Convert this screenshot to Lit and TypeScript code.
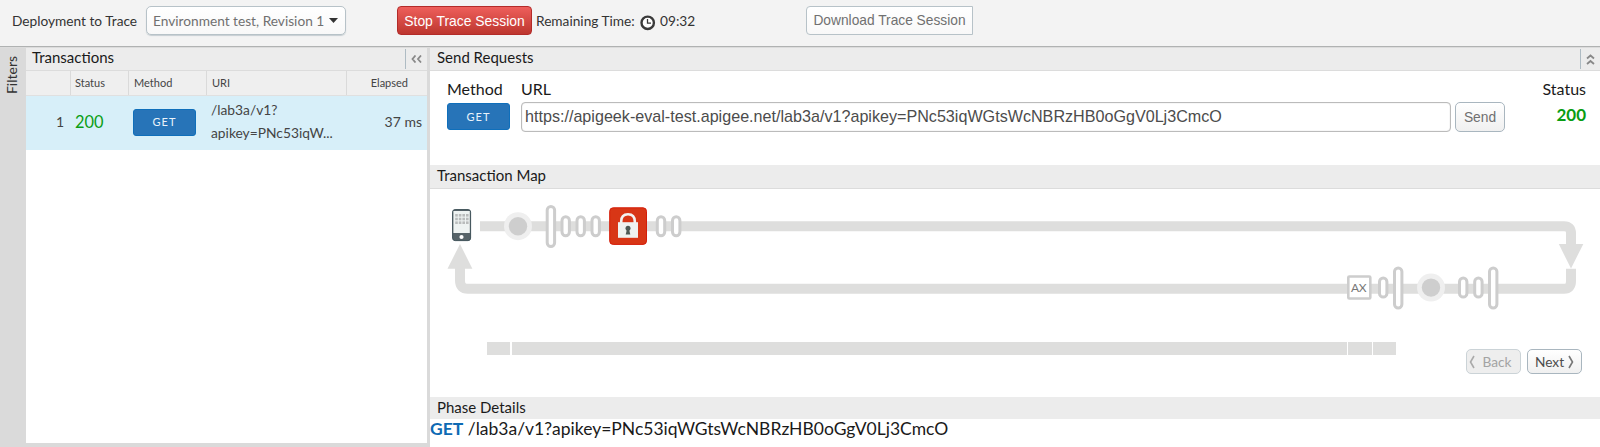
import { LitElement, html, svg, css } from "lit";
import { customElement } from "lit/decorators.js";

const API_PATH = "/lab3a/v1?apikey=PNc53iqWGtsWcNBRzHB0oGgV0Lj3CmcO";

@customElement("method-badge")
class MethodBadge extends LitElement {
  static styles = css`
    :host { display: flex; align-items: center; justify-content: center; box-sizing: border-box;
      width: 63px; height: 27px; border: 1px solid #0f6fbb; border-radius: 3px; padding-bottom: 1px;
      background: #2774b8; color: #eaf3fa; font: 11px Lato, sans-serif; letter-spacing: 1.1px; }
  `;
  render() { return html`<span><slot></slot></span>`; }
}

@customElement("transaction-map")
class TransactionMap extends LitElement {
  static styles = css`
    :host { display: block; height: 153px; }
    .map { display: block; }
    .line { fill: none; stroke: #dededd; stroke-width: 10; }
    .arrow { fill: #dededd; }
    .halo { fill: #efefef; }
    .dot { fill: #cecece; }
    .step { fill: #fff; stroke: #cdcdcd; stroke-width: 3; }
    .box { stroke-width: 2.6; }
    .ax { font: 12px Lato, sans-serif; fill: #777; }
  `;
  private pill(x: number, y: number, tall = false) {
    const h = tall ? 40 : 19;
    return svg`<rect class="step" x=${x - 3.5} y=${y - h / 2} width="7.4" height=${h} rx="3.7"/>`;
  }
  private node(x: number, y: number) {
    return svg`<circle class="halo" cx=${x} cy=${y} r="14"/><circle class="dot" cx=${x} cy=${y} r="9.2"/>`;
  }
  render() {
    const keys = [0, 1, 2].flatMap((r) => [0, 1, 2, 3].map((c) => [455.2 + c * 3.6, 214 + r * 3.7]));
    return html`<svg class="map" width="1170" height="153" viewBox="430 189 1170 153">
      <path class="line" d="M480 226.2H1564Q1571 226.2 1571 233.5V245"/>
      <path class="arrow" d="M1558.8 244H1583.3L1571 268.5Z"/>
      <path class="line" d="M1571 268.7V281Q1571 288.7 1564 288.7H468Q460 288.7 460 280.5V268"/>
      <path class="arrow" d="M460 244L472.4 268.8H447.5Z"/>
      <rect x="452.6" y="209.6" width="18" height="31" rx="2.5" fill="#566368" stroke="#3e5158"/>
      <rect x="453.4" y="211" width="16.4" height="22" fill="#eef3f2"/>
      ${keys.map(([x, y]) => svg`<rect x=${x} y=${y} width="2.6" height="2.6" fill="#b9bcbc"/>`)}
      <circle cx="461.5" cy="237" r="2.1" fill="#fff"/>
      ${this.node(518, 226.2)}
      ${this.pill(550.7, 226.4, true)}
      ${[565.5, 580.5, 595.5].map((x) => this.pill(x, 226.2))}
      <rect x="609.7" y="207.8" width="36.8" height="36.6" rx="3.5" fill="#d83616" stroke="#d51c08"/>
      <path d="M621.2 223V221.5Q621.2 214.2 628 214.2T634.8 221.5V223" fill="none" stroke="#f3f3f1" stroke-width="2.6"/>
      <rect x="618" y="222.2" width="20" height="15.6" fill="#eff2f0"/>
      <circle cx="628" cy="228.2" r="2.5" fill="#4e5a55"/>
      <path d="M627 229H629L630.3 234.6H625.7Z" fill="#4e5a55"/>
      ${[660.8, 676].map((x) => this.pill(x, 226.2))}
      <rect class="step box" x="1348.3" y="276.5" width="22" height="22" rx="1"/>
      <text class="ax" x="1351" y="292" textLength="15.5">AX</text>
      ${[1383, 1463, 1478.2].map((x) => this.pill(x, 287.6))}
      ${[1398, 1493].map((x) => this.pill(x, 287.9, true))}
      ${this.node(1431, 287.6)}
    </svg>`;
  }
}

@customElement("app-root")
class AppRoot extends LitElement {
  static styles = css`
    * { box-sizing: border-box; }
    :host { display: flex; flex-direction: column; width: 1600px; height: 447px; overflow: hidden;
      font: 14px Lato, sans-serif; color: #333; background: #fff; white-space: nowrap; }
    .top { height: 47px; flex: none; display: flex; align-items: flex-start; padding: 6px 0 0 12px;
      background: #f3f3f3; border-bottom: 1px solid #b0b2b2; font-size: 13.7px; }
    .top > * { height: 29px; display: flex; align-items: center; flex: none; }
    .deploy { width: 134px; }
    .select { width: 200px; border: 1px solid #b7c2c8; border-radius: 5px; background: linear-gradient(#fff, #f8f8f8);
      color: #707070; padding: 0 7px 0 6px; justify-content: space-between; box-shadow: 0 1px 1px #c6ced2; }
    .stop { margin-left: 51px; width: 135px; border-radius: 4px; border: 1px solid #b32b29; color: #fff;
      background: linear-gradient(#ee5f5b, #bd362f); font: 13.9px "Liberation Sans", sans-serif; justify-content: center; }
    .remain { margin-left: 4px; width: 104px; }
    .clock { width: 20px; }
    .time { width: 146px; }
    .download { width: 167px; border: 1px solid #b7c2c8; border-radius: 4px 0 0 4px; color: #707070;
      background: linear-gradient(#fff, #f8f8f8); font: 13.75px "Liberation Sans", sans-serif; justify-content: center; }
    .body { flex: 1; display: flex; min-height: 0; border-top: 1px solid #dcdcdc; }
    .filters { width: 26px; flex: none; background: #dadada; padding: 8px 2px 0 0; display: flex; align-items: flex-start; justify-content: center; }
    .vertical { writing-mode: vertical-rl; transform: rotate(180deg); font-size: 14px; line-height: 22px; }
    .left { width: 404px; flex: none; display: flex; flex-direction: column; border-right: 3px solid #dadada;
      border-bottom: 4px solid #dadada; }
    .title { height: 23px; flex: none; display: flex; justify-content: space-between; background: #ececec;
      border-bottom: 1px solid #dcdcdc; line-height: 18px; font-size: 15px; color: #1a1a1a; }
    .collapse { display: flex; align-items: center; justify-content: center; width: 22px; height: 20px; margin-top: 1px;
      border-left: 1px solid #aebbc3; }
    .bar .collapse { width: 20px; }
    .tx { padding-left: 6px; }
    .cols { display: grid; grid-template-columns: 45px 58px 78px 140px 80px; }
    .heads { height: 25px; background: #efefef; border-bottom: 1px solid #e0e0e0; font-size: 11px; line-height: 23px; color: #444; }
    .heads > * { border-right: 1px solid #dadada; padding-left: 5px; }
    .heads > :nth-child(2) { padding-left: 4px; }
    .heads > :last-child { border: 0; text-align: right; padding-right: 19px; }
    .row { height: 54px; background: #d7eff9; align-items: center; font-size: 14px; color: #444; padding-bottom: 2px; }
    .num { text-align: right; padding: 0 7px 2px 0; }
    .code { padding: 0 0 2px 4px; color: #0a9e14; font-size: 16.4px; }
    .badge { padding-left: 4px; }
    .uri { padding: 0 0 1px 4px; line-height: 22.5px; font-size: 13.8px; }
    .elapsed { text-align: right; padding: 0 5px 2px 0; }
    .right { flex: 1; display: flex; flex-direction: column; min-width: 0; }
    .bar { padding-left: 7px; }
    .maptitle { height: 24px; line-height: 20px; }
    .send { height: 94px; flex: none; display: flex; padding: 10px 14px 0 17px; font-size: 16px; color: #1a1a1a; }
    .field { display: flex; flex-direction: column; }
    .label { height: 21px; line-height: 15px; }
    .m { width: 74px; }
    .m .label { height: 22px; }
    .input { width: 930px; height: 30px; border: 1px solid #bbb; border-radius: 4px; box-shadow: inset 0 0 1px #aaa;
      font: 16.14px/27px "Liberation Sans", sans-serif; color: #4c4c4c; padding-left: 3px; }
    .btn { border: 1px solid #a9b6bf; border-radius: 5px; background: linear-gradient(#fff, #f0f0f0);
      display: flex; align-items: center; justify-content: center; color: #707070; }
    .go { width: 50px; height: 30px; margin: 21px 0 0 4px; font: 13.8px "Liberation Sans", sans-serif; }
    .st { margin-left: auto; text-align: right; }
    .ok { color: #099d12; font-weight: bold; font-size: 17px; line-height: 26px; }
    .foot { height: 55px; flex: none; display: flex; padding-left: 57px; align-items: flex-start; }
    .seg { height: 13px; background: #dededd; margin-right: 1px; }
    .seg:first-child { margin-right: 2px; }
    .nav { width: 55px; height: 25px; margin-top: 7px; font-size: 13.7px; gap: 4px; }
    .back { margin-left: 69px; color: #a3a3a3; background: #eee; border-color: #cbd3d7; gap: 7px; padding-right: 6px; }
    .next { margin-left: 6px; color: #4c4c4c; }
    .phase { height: 22px; border: 0; line-height: 20px; }
    .detail { font-size: 17.5px; line-height: 19px; color: #1a1a1a; }
    .get { color: #0d6ab4; font-weight: bold; }
  `;
  render() {
    const segs = [23, 835, 24, 23];
    return html`
      <div class="top">
        <div class="deploy">Deployment to Trace</div>
        <div class="select"><span>Environment test, Revision 1</span>
          <svg width="9" height="5"><path d="M0 0H9L4.5 5Z" fill="#333"/></svg></div>
        <div class="stop">Stop Trace Session</div>
        <div class="remain">Remaining Time:</div>
        <div class="clock"><svg width="16" height="20" viewBox="0 0 16 20"><circle cx="7.7" cy="11.8" r="6.2" fill="#fff" stroke="#3a3a3a" stroke-width="2.4"/><path d="M7.5 8V12.2H11" fill="none" stroke="#3a3a3a" stroke-width="1.3"/></svg></div>
        <div class="time">09:32</div>
        <div class="download">Download Trace Session</div>
      </div>
      <div class="body">
        <div class="filters"><span class="vertical">Filters</span></div>
        <div class="left">
          <div class="title tx"><span>Transactions</span><span class="collapse">
            <svg width="11" height="8" viewBox="0 0 11 8"><path d="M4.5 .5L1.5 4L4.5 7.5M10 .5L7 4L10 7.5" fill="none" stroke="#888" stroke-width="1.8"/></svg></span></div>
          <div class="cols heads"><span></span><span>Status</span><span>Method</span><span>URI</span><span>Elapsed</span></div>
          <div class="cols row"><span class="num">1</span><span class="code">200</span>
            <span class="badge"><method-badge>GET</method-badge></span>
            <span class="uri">/lab3a/v1?<br>apikey=PNc53iqW...</span><span class="elapsed">37 ms</span></div>
        </div>
        <div class="right">
          <div class="title bar"><span>Send Requests</span><span class="collapse">
            <svg width="9" height="11" viewBox="0 0 9 11"><path d="M1 4.5L4.5 1.5L8 4.5M1 10L4.5 7L8 10" fill="none" stroke="#888" stroke-width="1.8"/></svg></span></div>
          <div class="send">
            <div class="field m"><span class="label">Method</span><method-badge>GET</method-badge></div>
            <div class="field"><span class="label">URL</span><div class="input">https://apigeek-eval-test.apigee.net${API_PATH}</div></div>
            <div class="btn go">Send</div>
            <div class="field st"><span class="label">Status</span><span class="ok">200</span></div>
          </div>
          <div class="title bar maptitle"><span>Transaction Map</span></div>
          <transaction-map></transaction-map>
          <div class="foot">
            ${segs.map((w) => html`<div class="seg" style="width:${w}px"></div>`)}
            <div class="btn nav back"><svg width="6" height="14" viewBox="0 0 6 14"><path d="M5 1L1.5 7L5 13" fill="none" stroke="#aaa" stroke-width="1.6"/></svg>Back</div>
            <div class="btn nav next">Next<svg width="6" height="14" viewBox="0 0 6 14"><path d="M1 1L4.5 7L1 13" fill="none" stroke="#777" stroke-width="1.6"/></svg></div>
          </div>
          <div class="title bar phase"><span>Phase Details</span></div>
          <div class="detail"><span class="get">GET</span> ${API_PATH}</div>
        </div>
      </div>`;
  }
}
